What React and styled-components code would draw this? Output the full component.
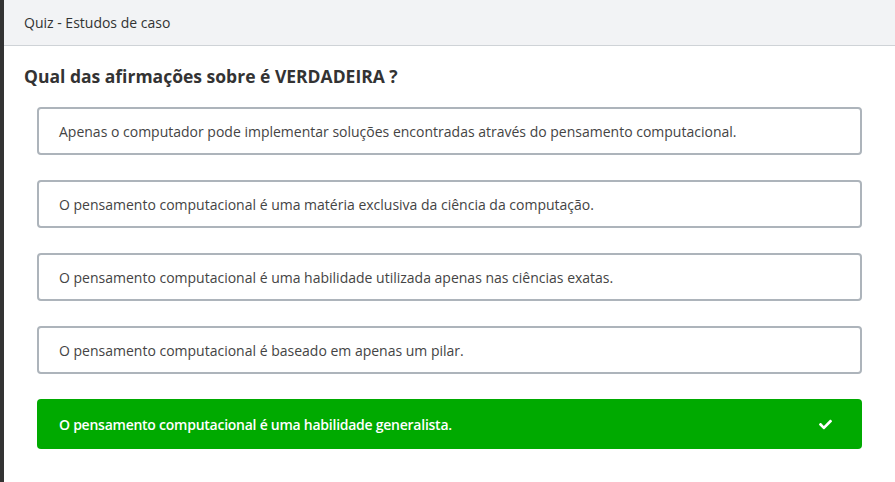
import React from 'react';
import styled, { createGlobalStyle } from 'styled-components';
import { FaCheck } from 'react-icons/fa';

const GlobalStyle = createGlobalStyle`
  html, body {
    margin: 0;
    padding: 0;
    background: #333333;
    font-family: "Open Sans", "Noto Sans", sans-serif;
  }
  * { box-sizing: border-box; }
`;

const Page = styled.div`
  height: 482px;
  padding-left: 4px;
  overflow: hidden;
`;

const Modal = styled.div`
  background: #ffffff;
  height: 100%;
  width: 893px;
  border-top-right-radius: 4px;
`;

const ModalHeader = styled.div`
  height: 46px;
  background: #f2f3f5;
  border-bottom: 1px solid #cfd3d7;
  padding: 0 20px;
  display: flex;
  align-items: center;
  font-size: 14px;
  color: #333333;
`;

const Body = styled.div`
  padding: 18px 35px 0 20px;
`;

const Question = styled.h2`
  margin: 0 0 19px;
  font-size: 17.5px;
  font-weight: 700;
  color: #333333;
  line-height: 24px;
`;

const Options = styled.div`
  display: flex;
  flex-direction: column;
  gap: 25px;
  padding-left: 13px;
`;

const Option = styled.div`
  height: ${p => (p.$correct ? '50px' : '48px')};
  border: ${p => (p.$correct ? 'none' : '2px solid #adb4bb')};
  border-radius: 4px;
  background: ${p => (p.$correct ? '#00aa00' : '#ffffff')};
  color: ${p => (p.$correct ? '#ffffff' : '#444444')};
  font-size: 14px;
  font-weight: ${p => (p.$correct ? 600 : 400)};
  letter-spacing: ${p => (p.$correct ? '-0.25px' : '0')};
  padding: 0 30px 0 ${p => (p.$correct ? '22px' : '20px')};
  display: flex;
  align-items: center;
  justify-content: space-between;
`;

const Check = styled(FaCheck)`
  font-size: 13px;
`;

const options = [
  'Apenas o computador pode implementar soluções encontradas através do pensamento computacional.',
  'O pensamento computacional é uma matéria exclusiva da ciência da computação.',
  'O pensamento computacional é uma habilidade utilizada apenas nas ciências exatas.',
  'O pensamento computacional é baseado em apenas um pilar.',
  'O pensamento computacional é uma habilidade generalista.',
];

export default function App() {
  return (
    <Page>
      <GlobalStyle />
      <Modal>
        <ModalHeader>Quiz - Estudos de caso</ModalHeader>
        <Body>
          <Question>Qual das afirmações sobre é VERDADEIRA ?</Question>
          <Options>
            {options.map((text, i) => {
              const correct = i === options.length - 1;
              return (
                <Option key={i} $correct={correct}>
                  <span>{text}</span>
                  {correct && <Check />}
                </Option>
              );
            })}
          </Options>
        </Body>
      </Modal>
    </Page>
  );
}
